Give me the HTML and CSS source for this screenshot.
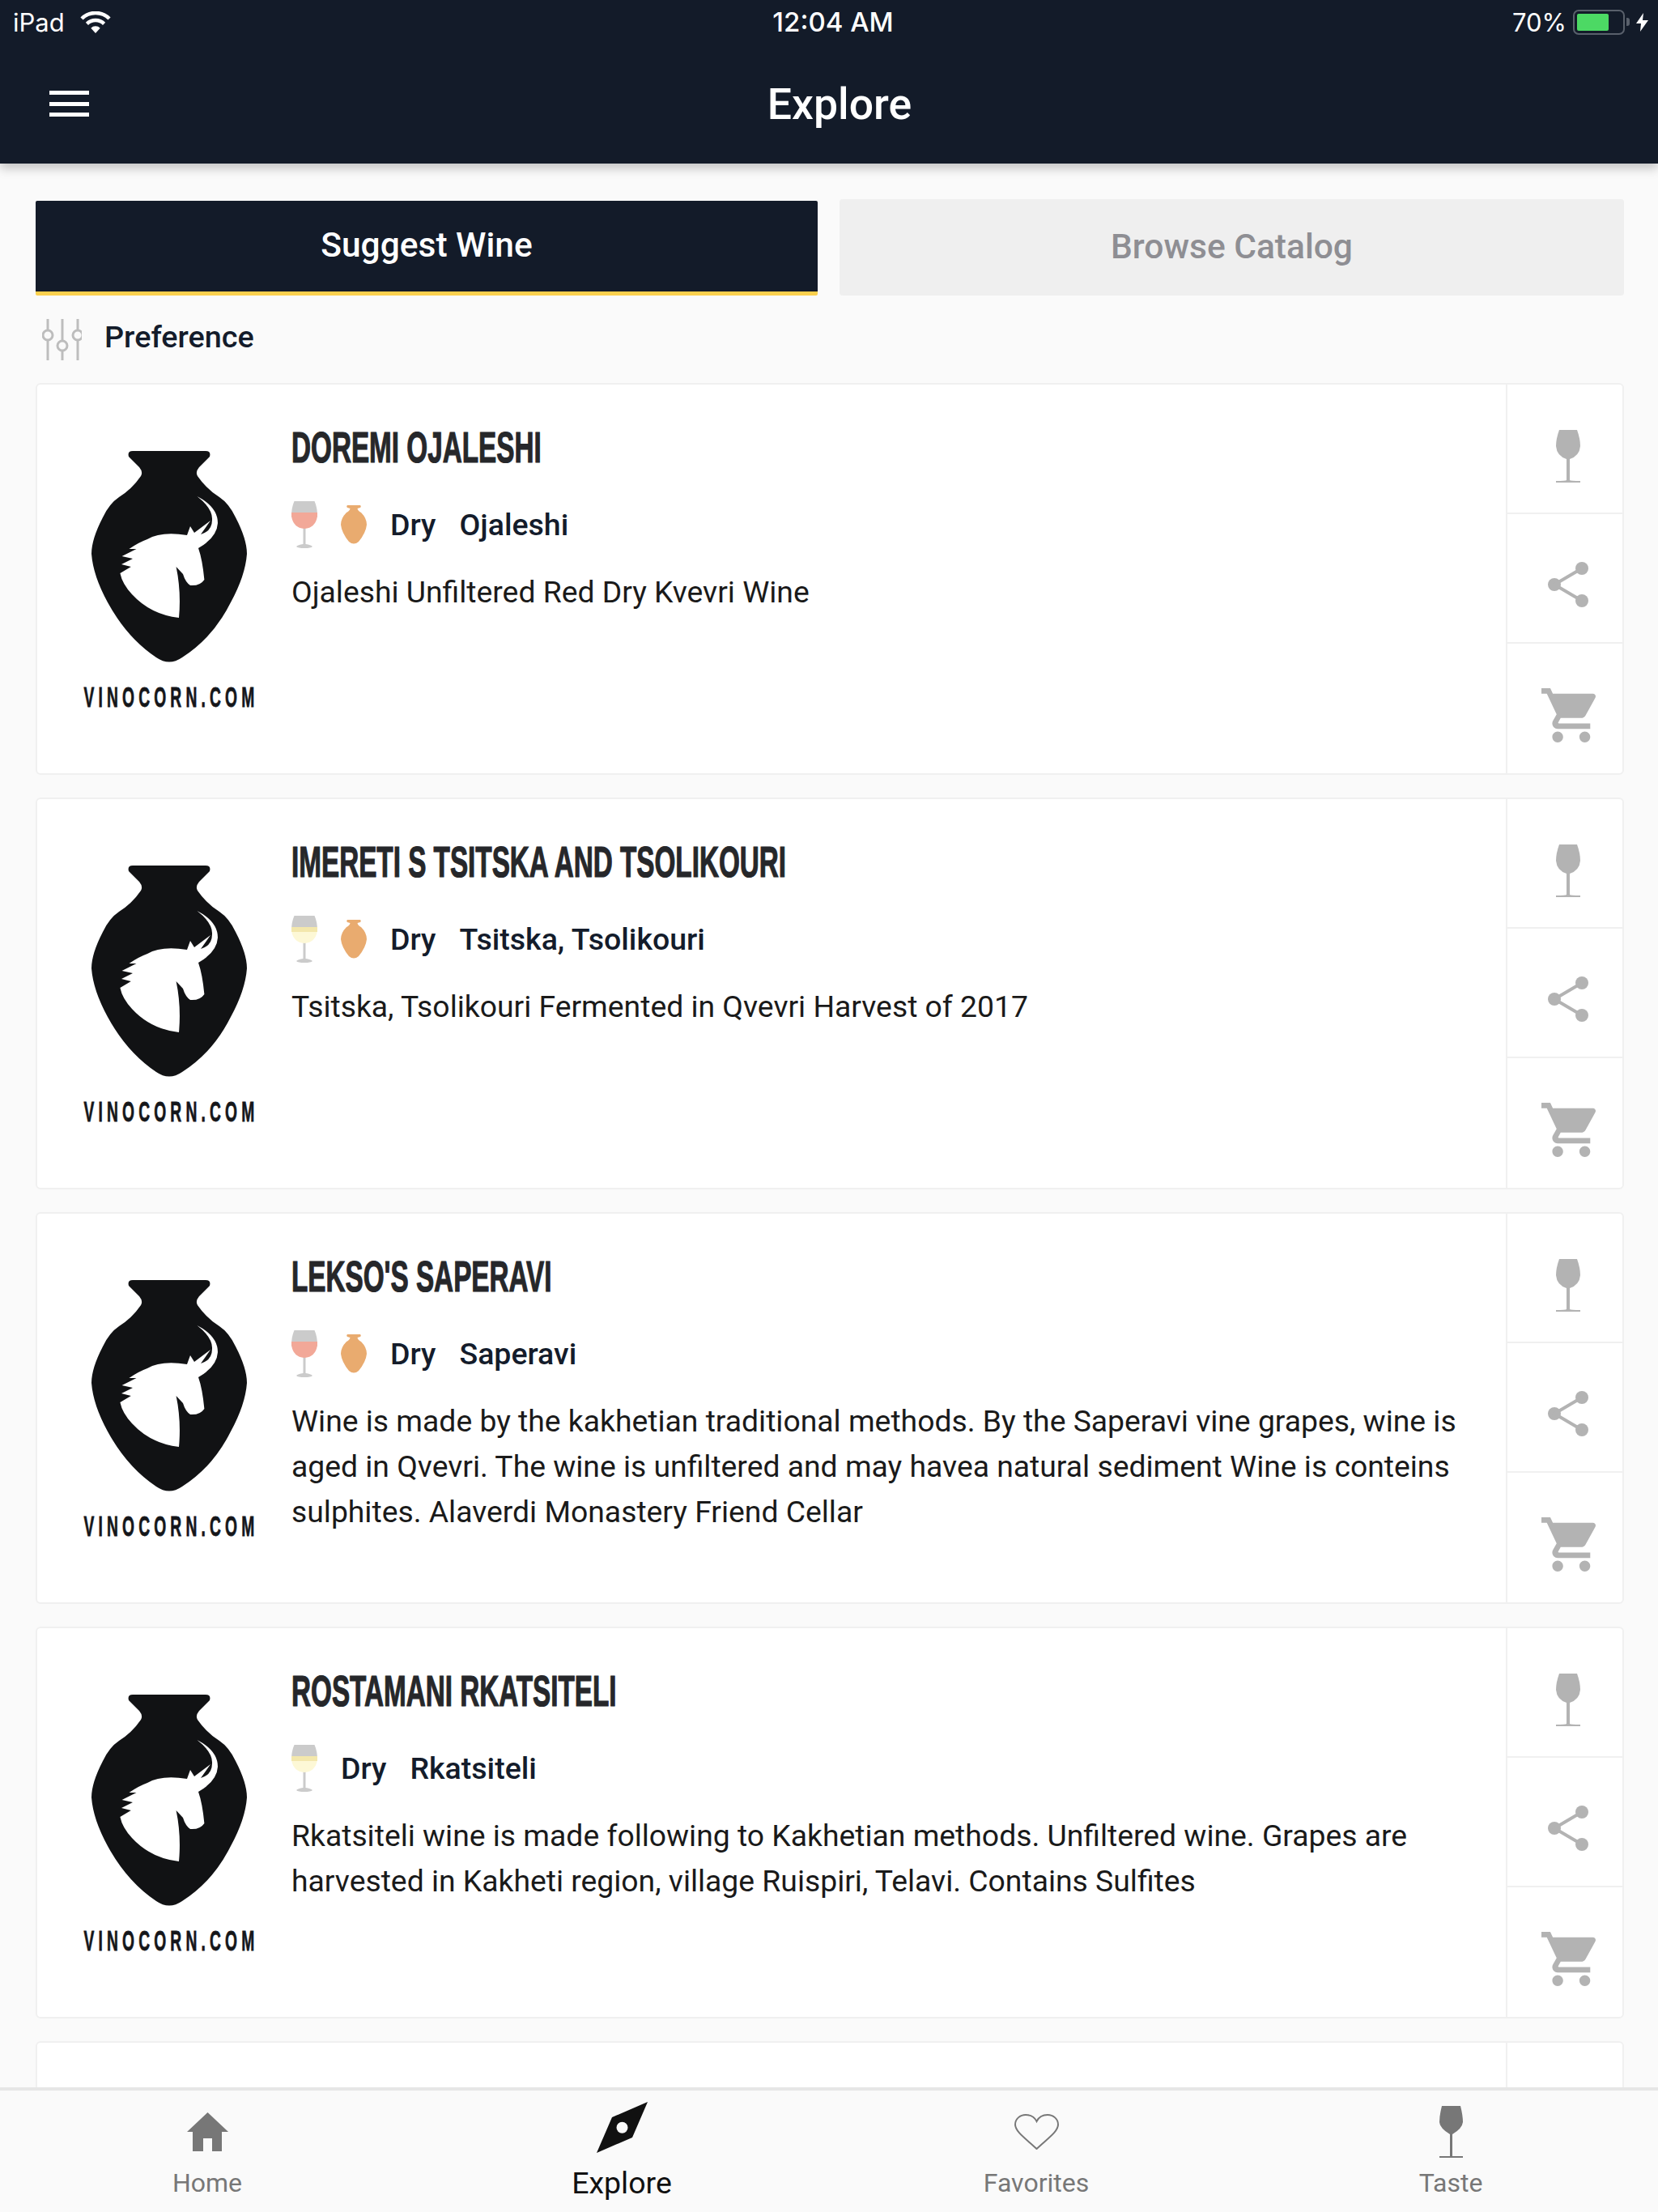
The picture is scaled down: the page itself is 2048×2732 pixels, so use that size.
FILE: index.html
```html
<!DOCTYPE html>
<html lang="en">
<head>
    <meta charset="UTF-8">
    <meta name="viewport" content="width=device-width, initial-scale=1.0">
    <title>Explore</title>
    <link rel="stylesheet" href="styles.css">
</head>
<body>
    <svg class="defs" aria-hidden="true">
        <symbol id="logo" viewBox="0 0 192 263">
            <path fill-rule="evenodd" fill="#111214" d="M51 1H141Q148 1 146 8L133 21Q128 27 131 32Q142 48 158 58Q170 66 178 83Q192 110 192 128Q190 155 172 188Q150 232 112 256Q96 267 80 256Q44 232 20 188Q2 155 0 128Q0 110 14 83Q22 66 34 58Q50 48 61 32Q64 27 59 21L46 8Q44 1 51 1Z
            M130.5 57Q156 70 156 90Q155 108 132 121Q137 135 139.4 160Q134 168 122 167Q116 163 113 153L104.6 144Q111 175 108 207Q73 203 50 178Q38 165 35.4 152L48.8 144L37 141L51 134L37.6 131L55.5 122H46.5Q58 114 69 110Q86 100 118 105L122 94L127 102L147 87L135 104Q149 100 149 86Q150 72 130.5 57Z"/>
        </symbol>
        <symbol id="wine" viewBox="0 0 30 66">
            <path d="M4 0H26Q30 11 30 20Q29 32 17 36V62Q18 63 30 63V65H0V63Q12 63 13 62V36Q1 32 0 20Q0 11 4 0Z"/>
        </symbol>
        <symbol id="share" viewBox="0 0 50 56">
            <circle cx="42" cy="8" r="8"/>
            <circle cx="8" cy="28" r="8"/>
            <circle cx="42" cy="48" r="8"/>
            <path d="M42 8L8 28L42 48" fill="none" stroke="#b3b3b3" stroke-width="4"/>
        </symbol>
        <symbol id="cart" viewBox="1 2 20 20">
            <path d="M7 18c-1.1 0-1.99.9-1.99 2S5.9 22 7 22s2-.9 2-2-.9-2-2-2zM1 2v2h2l3.6 7.59-1.35 2.45c-.16.28-.25.61-.25.96 0 1.1.9 2 2 2h12v-2H7.42c-.14 0-.25-.11-.25-.25l.03-.12.9-1.63h7.45c.75 0 1.41-.41 1.75-1.03l3.58-6.49c.08-.14.12-.31.12-.48 0-.55-.45-1-1-1H5.21l-.94-2H1zm16 16c-1.1 0-1.99.9-1.99 2s.89 2 1.99 2 2-.9 2-2-.9-2-2-2z"/>
        </symbol>
        <symbol id="jar" viewBox="0 0 32 48">
            <path fill="#e9ab6f" d="M8 0H24Q25.500 1.500 24 3L20.500 4Q21 7 25 9Q32 16 32 24Q31 34 22 45Q16 50 10 45Q1 34 0 24Q0 16 7 9Q11 7 11.500 4L8 3Q6.500 1.500 8 0Z"/>
        </symbol>
        <symbol id="glass-rose" viewBox="0 0 32 58">
            <path fill="#cbcbcb" d="M3.500 0H28.500Q32 8 32 18V20H0V18Q0 8 3.500 0Z"/>
            <path fill="#cbcbcb" d="M14.500 32H17.500V53Q24 54 26 56Q24 58 16 58Q8 58 6 56Q8 54 14.500 53Z"/>
            <path fill="#f2a898" d="M0 14H32V18Q30 33 16 34Q2 33 0 18Z"/>
        </symbol>
        <symbol id="glass-white" viewBox="0 0 32 58">
            <path fill="#cbcbcb" d="M3.500 0H28.500Q32 8 32 18V20H0V18Q0 8 3.500 0Z"/>
            <path fill="#cbcbcb" d="M14.500 32H17.500V53Q24 54 26 56Q24 58 16 58Q8 58 6 56Q8 54 14.500 53Z"/>
            <path fill="#fdf8d6" d="M0 14H32V18Q30 33 16 34Q2 33 0 18Z"/>
            <path fill="#f3e7ac" d="M0 14H32V20H0Z"/>
        </symbol>
    </svg>

    <header class="topbar">
        <div class="status">
            <div class="status-left">
                <span>iPad</span>
                <svg class="wifi" viewBox="0 0 38 27">
                    <path d="M2 9A24 24 0 0 1 36 9M8.400 15.400A15 15 0 0 1 29.600 15.400" fill="none" stroke="#fff" stroke-width="4.500"/>
                    <path d="M19 27L13.300 20.700A8 8 0 0 1 24.700 20.700Z" fill="#fff"/>
                </svg>
            </div>
            <div class="status-time">12:04 AM</div>
            <div class="status-right">
                <span>70%</span>
                <div class="battery"><div class="battery-fill"></div></div>
                <div class="battery-nub"></div>
                <svg class="bolt" viewBox="0 0 15 23"><path d="M9 0L0 13H6L5 23L15 9H8Z" fill="#fff"/></svg>
            </div>
        </div>
        <div class="navbar">
            <div class="burger"><span></span><span></span><span></span></div>
            <div class="nav-title">Explore</div>
        </div>
    </header>

    <main class="content">
        <div class="tabs">
            <div class="tab tab-active">Suggest Wine</div>
            <div class="tab">Browse Catalog</div>
        </div>

        <div class="preference">
            <svg class="sliders" viewBox="0 0 49 51" fill="none" stroke="#bdbdbd" stroke-width="3">
                <path d="M7 0V14M7 26V51M25 0V27M25 39V51M44 0V14M44 26V51"/>
                <circle cx="7" cy="20" r="6"/>
                <circle cx="25" cy="33" r="6"/>
                <circle cx="44" cy="20" r="6"/>
            </svg>
            <span>Preference</span>
        </div>

        <article class="card">
            <div class="card-logo">
                <svg class="logo"><use href="#logo"/></svg>
                <div class="logo-text">VINOCORN.COM</div>
            </div>
            <div class="card-body">
                <h2 class="wine-name">DOREMI OJALESHI</h2>
                <div class="wine-meta">
                    <svg class="glass"><use href="#glass-rose"/></svg>
                    <svg class="jar"><use href="#jar"/></svg>
                    <span>Dry</span>
                    <span>Ojaleshi</span>
                </div>
                <p class="wine-desc">Ojaleshi Unfiltered Red Dry Kvevri Wine</p>
            </div>
            <div class="card-actions">
                <div class="action"><svg class="ic-wine"><use href="#wine"/></svg></div>
                <div class="action"><svg class="ic-share"><use href="#share"/></svg></div>
                <div class="action"><svg class="ic-cart"><use href="#cart"/></svg></div>
            </div>
        </article>

        <article class="card">
            <div class="card-logo">
                <svg class="logo"><use href="#logo"/></svg>
                <div class="logo-text">VINOCORN.COM</div>
            </div>
            <div class="card-body">
                <h2 class="wine-name">IMERETI S TSITSKA AND TSOLIKOURI</h2>
                <div class="wine-meta">
                    <svg class="glass"><use href="#glass-white"/></svg>
                    <svg class="jar"><use href="#jar"/></svg>
                    <span>Dry</span>
                    <span>Tsitska, Tsolikouri</span>
                </div>
                <p class="wine-desc">Tsitska, Tsolikouri Fermented in Qvevri Harvest of 2017</p>
            </div>
            <div class="card-actions">
                <div class="action"><svg class="ic-wine"><use href="#wine"/></svg></div>
                <div class="action"><svg class="ic-share"><use href="#share"/></svg></div>
                <div class="action"><svg class="ic-cart"><use href="#cart"/></svg></div>
            </div>
        </article>

        <article class="card">
            <div class="card-logo">
                <svg class="logo"><use href="#logo"/></svg>
                <div class="logo-text">VINOCORN.COM</div>
            </div>
            <div class="card-body">
                <h2 class="wine-name">LEKSO'S SAPERAVI</h2>
                <div class="wine-meta">
                    <svg class="glass"><use href="#glass-rose"/></svg>
                    <svg class="jar"><use href="#jar"/></svg>
                    <span>Dry</span>
                    <span>Saperavi</span>
                </div>
                <p class="wine-desc">Wine is made by the kakhetian traditional methods. By the Saperavi vine grapes, wine is aged in Qvevri. The wine is unfiltered and may havea natural sediment Wine is conteins sulphites. Alaverdi Monastery Friend Cellar</p>
            </div>
            <div class="card-actions">
                <div class="action"><svg class="ic-wine"><use href="#wine"/></svg></div>
                <div class="action"><svg class="ic-share"><use href="#share"/></svg></div>
                <div class="action"><svg class="ic-cart"><use href="#cart"/></svg></div>
            </div>
        </article>

        <article class="card">
            <div class="card-logo">
                <svg class="logo"><use href="#logo"/></svg>
                <div class="logo-text">VINOCORN.COM</div>
            </div>
            <div class="card-body">
                <h2 class="wine-name">ROSTAMANI RKATSITELI</h2>
                <div class="wine-meta">
                    <svg class="glass"><use href="#glass-white"/></svg>
                    <span>Dry</span>
                    <span>Rkatsiteli</span>
                </div>
                <p class="wine-desc">Rkatsiteli wine is made following to Kakhetian methods. Unfiltered wine. Grapes are harvested in Kakheti region, village Ruispiri, Telavi. Contains Sulfites</p>
            </div>
            <div class="card-actions">
                <div class="action"><svg class="ic-wine"><use href="#wine"/></svg></div>
                <div class="action"><svg class="ic-share"><use href="#share"/></svg></div>
                <div class="action"><svg class="ic-cart"><use href="#cart"/></svg></div>
            </div>
        </article>

        <article class="card">
            <div class="card-logo"></div>
            <div class="card-body"></div>
            <div class="card-actions">
                <div class="action"><svg class="ic-wine"><use href="#wine"/></svg></div>
            </div>
        </article>
    </main>

    <nav class="tabbar">
        <div class="tabbar-item">
            <svg class="home" viewBox="0 0 51 48"><path d="M25.500 0L51 24H43V48H31V32H20V48H7V24H0Z"/></svg>
            <span>Home</span>
        </div>
        <div class="tabbar-item tabbar-active">
            <svg class="compass" viewBox="0 0 63 63"><path fill-rule="evenodd" d="M63 0L44 44L0 63L19 19ZM31.500 24.700A7 7 0 1 0 31.500 38.700A7 7 0 1 0 31.500 24.700Z"/></svg>
            <span>Explore</span>
        </div>
        <div class="tabbar-item">
            <svg class="heart" viewBox="0 0 55 44"><path d="M27.500 43C15 31 1 22 1 13C1 6 7 1 14 1C20 1 25 4 27.500 9C30 4 35 1 41 1C48 1 54 6 54 13C54 22 40 31 27.500 43Z"/></svg>
            <span>Favorites</span>
        </div>
        <div class="tabbar-item">
            <svg class="flute" viewBox="0 0 29 64"><path d="M3 0H26Q29 12 29 20Q28 28 16 35V62H29V64H0V62H13V35Q1 28 0 20Q0 12 3 0Z"/></svg>
            <span>Taste</span>
        </div>
    </nav>
</body>
</html>
```

FILE: styles.css
```css
* {
    box-sizing: border-box;
}
body {
    margin: 0;
    height: 2732px;
    overflow: hidden;
    display: flex;
    flex-direction: column;
    font-family: Roboto, "Liberation Sans", sans-serif;
    background-color: #fafafa;
    color: #141c2b;
}
.defs {
    display: none;
}

/* top */
.topbar {
    height: 202px;
    flex-shrink: 0;
    background-color: #131b29;
    color: #fff;
    box-shadow: 0 6px 12px rgba(0, 0, 0, 0.22);
    position: relative;
    z-index: 2;
}
.status {
    height: 54px;
    padding: 0 12px 0 16px;
    display: grid;
    grid-template-columns: 1fr auto 1fr;
    align-items: center;
    font-family: Inter, Roboto, sans-serif;
    font-size: 31px;
}
.status-left {
    display: flex;
    align-items: center;
    gap: 19px;
}
.wifi {
    width: 38px;
    height: 27px;
}
.status-time {
    padding-left: 6px;
    font-size: 33px;
    font-weight: 500;
}
.status-right {
    display: flex;
    align-items: center;
    justify-content: flex-end;
}
.battery {
    width: 64px;
    height: 31px;
    margin-left: 8px;
    padding: 3px;
    border: 2px solid #59606b;
    border-radius: 7px;
}
.battery-fill {
    width: 39px;
    height: 100%;
    background-color: #4cd964;
    border-radius: 2px;
}
.battery-nub {
    width: 4px;
    height: 10px;
    margin-left: 2px;
    background-color: #59606b;
    border-radius: 0 3px 3px 0;
}
.bolt {
    width: 15px;
    height: 23px;
    margin-left: 8px;
}
.navbar {
    height: 148px;
    padding: 0 0 0 61px;
    display: flex;
    align-items: center;
}
.burger {
    width: 49px;
    height: 32px;
    display: flex;
    flex-direction: column;
    justify-content: space-between;
}
.burger span {
    height: 5px;
    background-color: #fff;
}
.nav-title {
    flex: 1;
    padding-right: 84px;
    text-align: center;
    font-size: 53.5px;
    font-weight: 500;
}

/* list */
.content {
    flex: 1;
    overflow: hidden;
    padding: 44px 42px 0 44px;
}
.tabs {
    display: grid;
    grid-template-columns: 966px 969px;
    gap: 27px;
    align-items: end;
}
.tab {
    height: 119px;
    padding-bottom: 3px;
    display: flex;
    align-items: center;
    justify-content: center;
    background-color: #efefef;
    border-radius: 4px;
    color: #8e8e93;
    font-size: 42.5px;
    font-weight: 500;
}
.tab-active {
    height: 117px;
    padding-bottom: 3px;
    background-color: #131b29;
    border-bottom: 5px solid #fbd04e;
    border-radius: 2px;
    color: #fff;
}
.preference {
    height: 108px;
    padding: 0 0 6px 8px;
    display: flex;
    align-items: center;
    gap: 28px;
    font-size: 37.8px;
    font-weight: 500;
}
.sliders {
    width: 49px;
    height: 51px;
    margin-top: 6px;
}
.card {
    height: 484px;
    margin-bottom: 28px;
    display: flex;
    background-color: #fff;
    border: 2px solid #f0f0f0;
    border-radius: 6px;
}
.card-logo {
    width: 314px;
    padding: 81px 0 0 12px;
    display: flex;
    flex-direction: column;
    align-items: center;
    flex-shrink: 0;
}
.logo {
    width: 192px;
    height: 263px;
}
.logo-text {
    margin: 24px 0 0 5px;
    font-family: "Liberation Sans", sans-serif;
    font-size: 35px;
    line-height: 36px;
    font-weight: 700;
    letter-spacing: 9.4px;
    color: #15161a;
    white-space: nowrap;
    -webkit-text-stroke: 0.8px #15161a;
    transform: scaleX(0.55);
}
.card-body {
    flex: 1;
    min-width: 0;
    padding: 47px 50px 0 0;
}
/* no condensed face is installed, so the label font is squeezed */
.wine-name {
    margin: 0;
    font-family: "Liberation Sans", sans-serif;
    font-size: 54px;
    line-height: 60px;
    font-weight: 700;
    color: #26272a;
    white-space: nowrap;
    -webkit-text-stroke: 1.2px #26272a;
    transform: scaleX(0.616);
    transform-origin: left center;
}
.wine-meta {
    margin-top: 36px;
    height: 60px;
    display: flex;
    align-items: center;
    gap: 29px;
    font-size: 37.5px;
    font-weight: 500;
}
.glass {
    width: 32px;
    height: 58px;
}
.jar {
    width: 32px;
    height: 48px;
}
.wine-desc {
    margin: 25px 0 0;
    font-size: 37.3px;
    line-height: 56px;
    color: #1a1a1a;
}
.card-actions {
    width: 144px;
    flex-shrink: 0;
    border-left: 2px solid #f0f0f0;
    fill: #b3b3b3;
}
.action {
    height: 160px;
    padding: 16px 0 0 8px;
    display: flex;
    align-items: center;
    justify-content: center;
    border-bottom: 2px solid #f0f0f0;
}
.action:last-child {
    border-bottom: none;
}
.ic-wine {
    width: 30px;
    height: 66px;
    margin-top: 4px;
}
.ic-share {
    width: 50px;
    height: 56px;
}
.ic-cart {
    width: 67px;
    height: 67px;
}

/* bottom */
.tabbar {
    height: 154px;
    flex-shrink: 0;
    margin-top: -4px;
    display: grid;
    grid-template-columns: repeat(4, 1fr);
    background-color: #fafafa;
    border-top: 4px solid #e6e6e6;
    position: relative;
    z-index: 2;
    color: #777;
    fill: #777;
    font-size: 32px;
    text-align: center;
}
.tabbar-item {
    display: flex;
    flex-direction: column;
    align-items: center;
    position: relative;
    padding-top: 95px;
}
.tabbar-item svg {
    position: absolute;
}
.tabbar-active {
    color: #111;
    fill: #111;
    font-size: 37.5px;
    padding-top: 92px;
}
.home {
    top: 27px;
    width: 51px;
    height: 48px;
}
.compass {
    top: 14px;
    width: 63px;
    height: 63px;
}
.heart {
    top: 29px;
    width: 55px;
    height: 44px;
    fill: none;
    stroke: #777;
    stroke-width: 2;
}
.flute {
    top: 19px;
    width: 29px;
    height: 64px;
}
```
